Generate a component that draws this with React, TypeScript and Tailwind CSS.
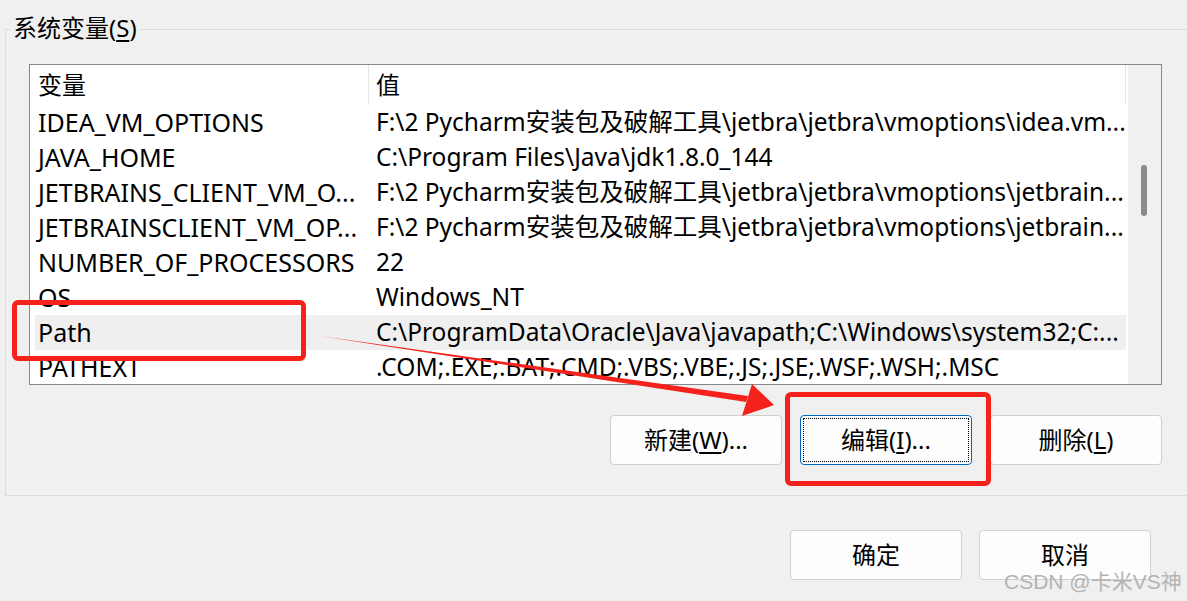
import React from 'react'

const rows = [
  ['IDEA_VM_OPTIONS', 'F:\\2 Pycharm安装包及破解工具\\jetbra\\jetbra\\vmoptions\\idea.vm...'],
  ['JAVA_HOME', 'C:\\Program Files\\Java\\jdk1.8.0_144'],
  ['JETBRAINS_CLIENT_VM_O...', 'F:\\2 Pycharm安装包及破解工具\\jetbra\\jetbra\\vmoptions\\jetbrain...'],
  ['JETBRAINSCLIENT_VM_OP...', 'F:\\2 Pycharm安装包及破解工具\\jetbra\\jetbra\\vmoptions\\jetbrain...'],
  ['NUMBER_OF_PROCESSORS', '22'],
  ['OS', 'Windows_NT'],
  ['Path', 'C:\\ProgramData\\Oracle\\Java\\javapath;C:\\Windows\\system32;C:...'],
  ['PATHEXT', '.COM;.EXE;.BAT;.CMD;.VBS;.VBE;.JS;.JSE;.WSF;.WSH;.MSC'],
]

const font = { fontFamily: '"Noto Sans", "Noto Sans CJK SC", sans-serif' }

function Btn({ children, focused }: { children: React.ReactNode; focused?: boolean }) {
  return (
    <button
      type="button"
      className={
        'w-[172px] h-[50px] rounded-[4px] bg-[#fdfdfd] text-[24px] text-black flex items-center justify-center ' +
        (focused ? 'border border-[#0067c0] p-[2px]' : 'border border-[#d0d0d0]')
      }
    >
      {focused ? (
        <span className="w-full h-full border border-dotted border-black flex items-center justify-center">
          {children}
        </span>
      ) : (
        children
      )}
    </button>
  )
}

export default function App() {
  return (
    <div
      className="w-[1187px] h-[601px] bg-[#f0f0f0] relative overflow-hidden text-black"
      style={font}
    >
      {/* group box */}
      <div className="pt-[29px] pl-[5px]">
        <div className="relative w-[1250px] h-[467px] border border-[#dcdcdc] pt-[34px] pl-[23px]">
          <span className="absolute left-[4px] top-[-17px] px-[3px] bg-[#f0f0f0] text-[24px] leading-[30px]">
            系统变量(<span className="underline underline-offset-[3px]">S</span>)
          </span>

          {/* list view */}
          <div className="w-[1133px] h-[321px] border border-[#828790] bg-white flex overflow-hidden">
            <div className="w-[1096px] flex flex-col text-[25px]">
              <div className="h-[40px] shrink-0 flex items-center text-[24px]">
                <div className="w-[339px] h-full pl-[8px] flex items-center border-r border-[#e5e5e5]">变量</div>
                <div className="flex-1 h-full pl-[7px] flex items-center border-r border-[#e5e5e5]">值</div>
              </div>
              {rows.map(([name, value]) => (
                <div key={name} className="h-[35px] shrink-0 pl-[5px] flex">
                  <div
                    className={
                      'flex-1 flex items-center whitespace-nowrap overflow-hidden ' +
                      (name === 'Path' ? 'bg-[#efefef]' : '')
                    }
                  >
                    <div className="w-[334px] pl-[3px] shrink-0">{name}</div>
                    <div className="pl-[7px] text-[24.5px]">{value}</div>
                  </div>
                </div>
              ))}
            </div>
            <div className="flex-1 bg-[#f0f0f0] ml-[2px] flex justify-center pt-[100px]">
              <div className="w-[6px] h-[51px] rounded-full bg-[#8a8a8a] ml-[-1px]" />
            </div>
          </div>

          <div className="w-[1133px] flex justify-end gap-[18px] mt-[30px]">
            <Btn>
              新建(<span className="underline underline-offset-[3px]">W</span>)...
            </Btn>
            <Btn focused>
              编辑(<span className="underline underline-offset-[3px]">I</span>)...
            </Btn>
            <Btn>
              删除(<span className="underline underline-offset-[3px]">L</span>)
            </Btn>
          </div>
        </div>
      </div>

      <div className="flex justify-end gap-[17px] pr-[36px] mt-[34px]">
        <Btn>确定</Btn>
        <Btn>取消</Btn>
      </div>

      {/* annotations */}
      <div className="absolute left-[12px] top-[300px] w-[294px] h-[61px] border-[5px] border-[#f5221b] rounded-[6px]" />
      <div className="absolute left-[785px] top-[392px] w-[206px] h-[94px] border-[5px] border-[#f5221b] rounded-[6px]" />
      <svg className="absolute left-0 top-0" width="1187" height="601">
        <polygon points="320,336 748,396 746,402" fill="#f5221b" />
        <polygon points="752,384 774,405 742,416" fill="#f5221b" />
      </svg>

      <span
        className="absolute left-[1004px] top-[566px] text-[21px] text-[#b4b4b4]"
        style={{ fontFamily: '"Liberation Sans", "Noto Sans CJK SC", sans-serif' }}
      >
        CSDN @卡米VS神
      </span>
    </div>
  )
}
